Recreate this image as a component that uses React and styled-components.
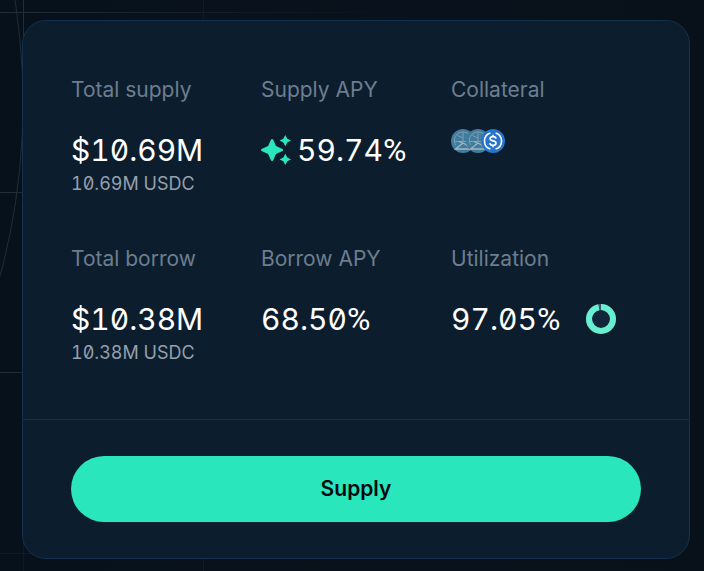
import React from "react";
import styled, { createGlobalStyle } from "styled-components";

const GlobalStyle = createGlobalStyle`
  * { box-sizing: border-box; }
  body {
    margin: 0;
    background: #07111c;
    font-family: Inter, "Liberation Sans", sans-serif;
  }
`;

const Page = styled.main`
  position: relative;
  min-height: 100vh;
  overflow: hidden;
  padding: 20px 14px 12px 22px;
  background: linear-gradient(90deg, #06111c, #09111c 40%, #08111a);
`;

const Backdrop = styled.svg`
  position: absolute;
  top: 0;
  left: 0;
  fill: none;
  stroke: #242d34;
`;

const Card = styled.section`
  position: relative;
  border: 1px solid #14304f;
  border-radius: 24px;
  background: #0c1d2e;
`;

const Stats = styled.dl`
  display: grid;
  grid-template-columns: repeat(3, 1fr);
  row-gap: 42px;
  margin: 0;
  padding: 48px 48px 54px;
`;

const Stat = styled.div`
  display: flex;
  flex-direction: column;
  gap: 17px;
`;

const Label = styled.dt`
  font-size: 21px;
  line-height: 42px;
  color: #6c7e8e;
`;

const Detail = styled.dd`
  margin: 0;
  font-variant-numeric: tabular-nums slashed-zero;
`;

const Value = styled.div`
  display: flex;
  align-items: center;
  gap: ${({ $gap }) => $gap || 0}px;
  font-size: 30px;
  line-height: 44px;
  color: #ffffff;
`;

const PercentSign = styled.span`
  font-family: Roboto, "Liberation Sans", sans-serif;
  font-size: 32px;
  line-height: 30px;
`;

const Amount = styled.div`
  font-size: 18px;
  line-height: 24px;
  color: #94a0ab;
`;

const Tokens = styled.div`
  display: flex;
  align-items: center;
  height: 26px;
  svg { display: block; }
  svg + svg { margin-left: -9px; }
`;

const Footer = styled.footer`
  border-top: 1px solid #14304f;
  padding: 36px 48px;
`;

const SupplyButton = styled.button`
  display: block;
  width: 100%;
  height: 66px;
  border: 0;
  border-radius: 33px;
  background: #2ae6bc;
  color: #020a10;
  font: 600 21px/30px Inter, "Liberation Sans", sans-serif;
  cursor: pointer;
`;

const Percentage = ({ children }) => (
  <span>
    {children}
    <PercentSign>%</PercentSign>
  </span>
);

const Sparkles = () => (
  <svg width="30" height="30" viewBox="0 0 30 30" fill="#2ae6bc" aria-hidden="true">
    <path d="M11 4Q12 4 12.5 5.2L14.6 10.2Q15 11.2 16 11.6L21 13.8Q22.2 14.3 22.2 15Q22.2 15.7 21 16.2L16 18.4Q15 18.8 14.6 19.8L12.5 24.8Q12 26 11 26Q10.2 26 9.7 24.8L7.5 19.8Q7.1 18.8 6.1 18.4L1.1 16.2Q0 15.7 0 15Q0 14.3 1.1 13.8L6.1 11.6Q7.1 11.2 7.5 10.2L9.7 5.2Q10.2 4 11 4Z" />
    <path d="M24.3 0L26.3 3.7L30 5.6L26.3 7.5L24.3 11.2L22.3 7.5L18.6 5.6L22.3 3.7Z" />
    <path d="M24.3 18.8L26.3 22.5L30 24.4L26.3 26.3L24.3 30L22.3 26.3L18.6 24.4L22.3 22.5Z" />
  </svg>
);

const PoolToken = () => (
  <svg width="24" height="24" viewBox="0 0 24 24" fill="none" role="img" aria-label="Pool token">
    <circle cx="12" cy="12" r="12" fill="#417c9e" />
    <g stroke="#7f9fae" strokeWidth="1">
      <path d="M4.500 16A8.700 8.700 0 1 1 19.500 16M12 3.500V12M4 12.500H20M6.500 6.500L12 9" />
      <path d="M8 12.500L15 15.500L19.500 20H4.500L12 14" stroke="#a4b8c0" strokeWidth="1.3" />
    </g>
  </svg>
);

const UsdcToken = () => (
  <svg width="24" height="24" viewBox="0 0 24 24" fill="none" role="img" aria-label="USDC">
    <circle cx="12" cy="12" r="12" fill="#2775ca" />
    <g stroke="#fff" strokeWidth="1.6">
      <path d="M9.400 3.900A8.500 8.500 0 0 0 9.400 20.100M14.600 3.900A8.500 8.500 0 0 1 14.600 20.100" />
      <path d="M15 9.700C14.800 8.200 13.700 7.600 12 7.600C10.200 7.600 9.100 8.500 9.100 9.800C9.100 11.200 10.200 11.600 12 11.900C13.900 12.200 15 12.800 15 14.200C15 15.600 13.800 16.400 12 16.400C10.200 16.400 9.100 15.700 8.900 14.200M12 5.800V7.700M12 16.300V18.200" />
    </g>
  </svg>
);

const Donut = ({ percent }) => (
  <svg width="30" height="30" viewBox="0 0 30 30" fill="none" aria-hidden="true">
    <circle cx="15" cy="15" r="12" fill="#12263b" stroke="#405768" strokeWidth="6" />
    <circle
      cx="15"
      cy="15"
      r="12"
      stroke="#68eed0"
      strokeWidth="6"
      pathLength="100"
      strokeDasharray={`${percent} 100`}
      transform="rotate(-90 15 15)"
    />
  </svg>
);

export default function App() {
  return (
    <Page>
      <GlobalStyle />
      <Backdrop width="704" height="571" aria-hidden="true">
        <defs>
          <linearGradient id="fade" x1="0" x2="400" y1="0" y2="0" gradientUnits="userSpaceOnUse">
            <stop offset="0" stopColor="#242d34" />
            <stop offset="1" stopColor="#242d34" stopOpacity="0" />
          </linearGradient>
        </defs>
        <path d="M0 12.500H400M0 192.500H60M0 372.500H60" stroke="url(#fade)" />
        <path d="M23.500 0V60" />
        <path d="M203.500 0V30M0 553.500H60M23.500 520V571M203.500 550V571" stroke="#111b25" />
        <circle cx="-643" cy="103" r="666" />
      </Backdrop>
      <Card>
        <Stats>
          <Stat>
            <Label>Total supply</Label>
            <Detail>
              <Value>$10.69M</Value>
              <Amount>10.69M USDC</Amount>
            </Detail>
          </Stat>
          <Stat>
            <Label>Supply APY</Label>
            <Detail>
              <Value $gap={6}>
                <Sparkles />
                <Percentage>59.74</Percentage>
              </Value>
            </Detail>
          </Stat>
          <Stat>
            <Label>Collateral</Label>
            <Detail>
              <Tokens>
                <PoolToken />
                <PoolToken />
                <UsdcToken />
              </Tokens>
            </Detail>
          </Stat>
          <Stat>
            <Label>Total borrow</Label>
            <Detail>
              <Value>$10.38M</Value>
              <Amount>10.38M USDC</Amount>
            </Detail>
          </Stat>
          <Stat>
            <Label>Borrow APY</Label>
            <Detail>
              <Value>
                <Percentage>68.50</Percentage>
              </Value>
            </Detail>
          </Stat>
          <Stat>
            <Label>Utilization</Label>
            <Detail>
              <Value $gap={26}>
                <Percentage>97.05</Percentage>
                <Donut percent={97.05} />
              </Value>
            </Detail>
          </Stat>
        </Stats>
        <Footer>
          <SupplyButton type="button">Supply</SupplyButton>
        </Footer>
      </Card>
    </Page>
  );
}
